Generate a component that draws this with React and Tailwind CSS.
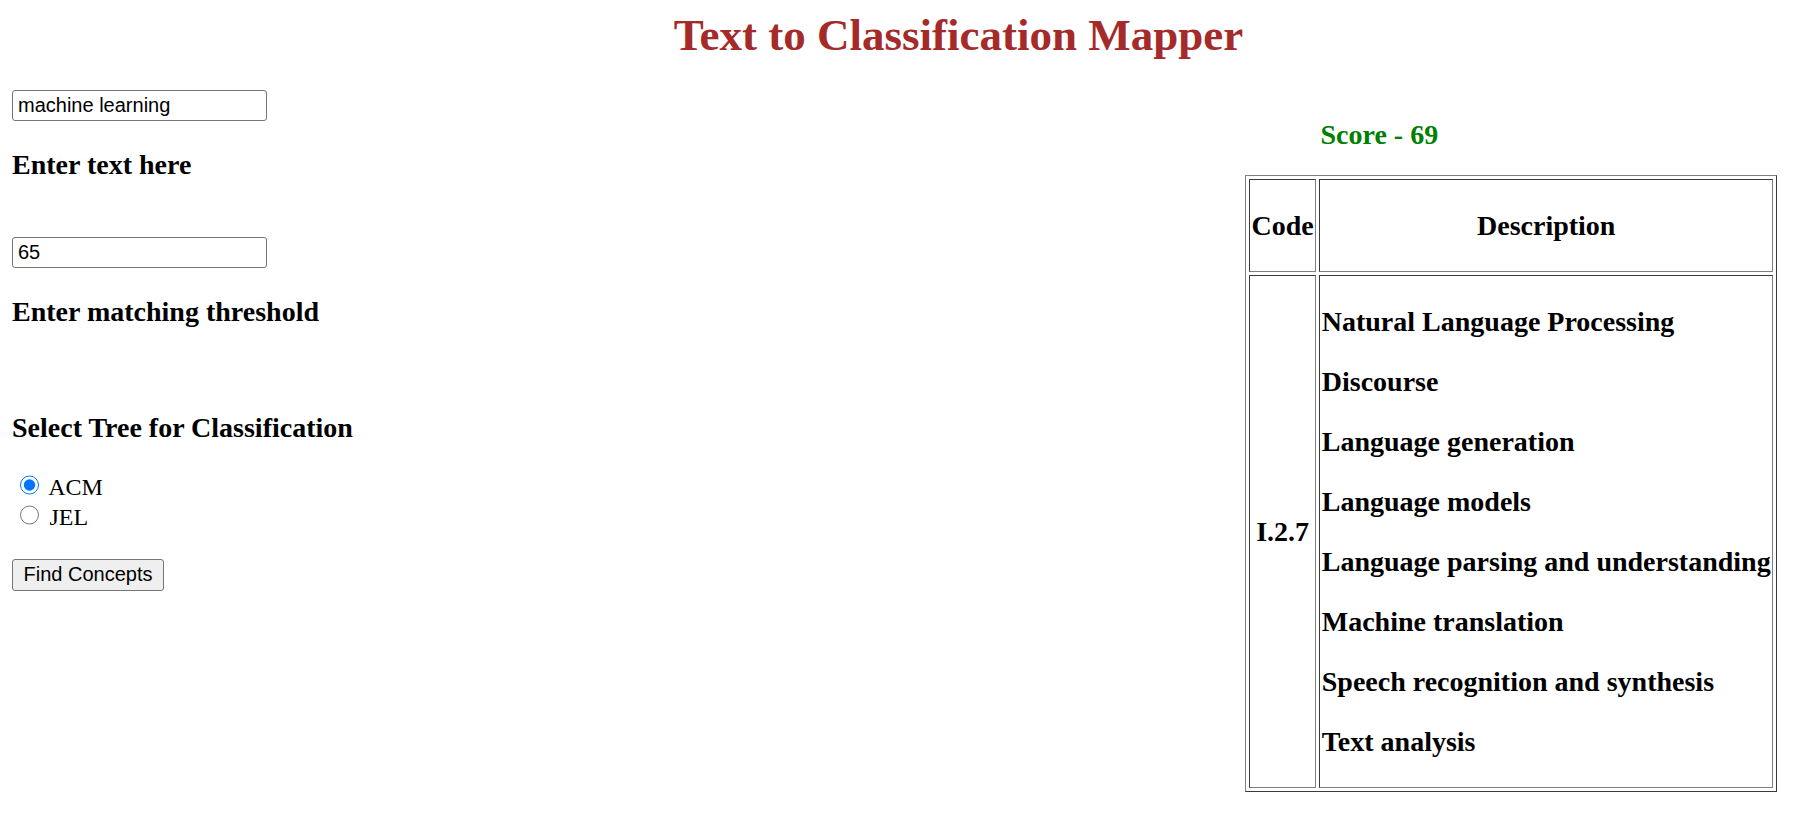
import React from "react";

const items = [
  "Natural Language Processing",
  "Discourse",
  "Language generation",
  "Language models",
  "Language parsing and understanding",
  "Machine translation",
  "Speech recognition and synthesis",
  "Text analysis",
];

const cell =
  "border border-t-[#3a3a3a] border-l-[#3a3a3a] border-r-[#808080] border-b-[#808080] p-[1.5px]";
const h3 = "text-[28px] font-bold leading-[normal]";

export default function App() {
  return (
    <div className="w-[1802px] min-h-[816px] bg-white text-black font-['Liberation_Serif','Times_New_Roman',serif]">
      <h1 className="pt-[9px] pl-[115px] text-center text-[45px] font-bold leading-[normal] text-[#a52a2a]">
        Text to Classification Mapper
      </h1>
      <div className="flex pl-[12px]">
        <div className="w-[1233px] shrink-0 flex flex-col items-start">
          <input
            type="text"
            defaultValue="machine learning"
            className="mt-[29px] w-[255px] h-[31px] border border-[#767676] rounded-[3px] px-[5px] bg-white text-black text-[20px] font-['Liberation_Sans',Arial,sans-serif] outline-none"
          />
          <h3 className={`mt-[28px] ${h3}`}>Enter text here</h3>
          <input
            type="text"
            defaultValue="65"
            className="mt-[55.5px] w-[255px] h-[31px] border border-[#767676] rounded-[3px] px-[5px] bg-white text-black text-[20px] font-['Liberation_Sans',Arial,sans-serif] outline-none"
          />
          <h3 className={`mt-[28px] ${h3}`}>Enter matching threshold</h3>
          <h3 className={`mt-[84px] ${h3}`}>Select Tree for Classification</h3>
          <div className="mt-[27px] text-[24px] leading-[normal]">
            <div>
              <label>
                <input
                  type="radio"
                  name="tree"
                  defaultChecked
                  className="mt-[4.5px] mr-[4.5px] ml-[7.5px] w-[19.5px] h-[19.5px] align-baseline"
                />{" "}
                ACM
              </label>
            </div>
            <div>
              <label>
                <input
                  type="radio"
                  name="tree"
                  className="mt-[4.5px] mr-[4.5px] ml-[7.5px] w-[19.5px] h-[19.5px] align-baseline"
                />{" "}
                JEL
              </label>
            </div>
          </div>
          <button className="mt-[28.6px] h-[31.5px] px-[10.5px] border border-[#767676] rounded-[3px] bg-[#efefef] text-black text-[20px] leading-[normal] font-['Liberation_Sans',Arial,sans-serif]">
            Find Concepts
          </button>
        </div>
        <div className="shrink-0">
          <h3 className={`mt-[57.5px] pl-[75.5px] ${h3} text-[#008000]`}>Score - 69</h3>
          <table className="mt-[24.5px] whitespace-nowrap border-separate border-spacing-[3px] border border-t-[#808080] border-l-[#808080] border-r-[#3a3a3a] border-b-[#3a3a3a]">
            <thead>
              <tr>
                <th className={`${cell} text-center align-middle`}>
                  <h3 className={`my-[28px] ${h3}`}>Code</h3>
                </th>
                <th className={`${cell} text-center align-middle`}>
                  <h3 className={`my-[28px] ${h3}`}>Description</h3>
                </th>
              </tr>
            </thead>
            <tbody>
              <tr>
                <td className={`${cell} text-center align-middle`}>
                  <h3 className={`my-[28px] ${h3}`}>I.2.7</h3>
                </td>
                <td className={`${cell} text-left align-middle`}>
                  {items.map((t) => (
                    <h3 key={t} className={`my-[28px] ${h3}`}>
                      {t}
                    </h3>
                  ))}
                </td>
              </tr>
            </tbody>
          </table>
        </div>
      </div>
    </div>
  );
}
